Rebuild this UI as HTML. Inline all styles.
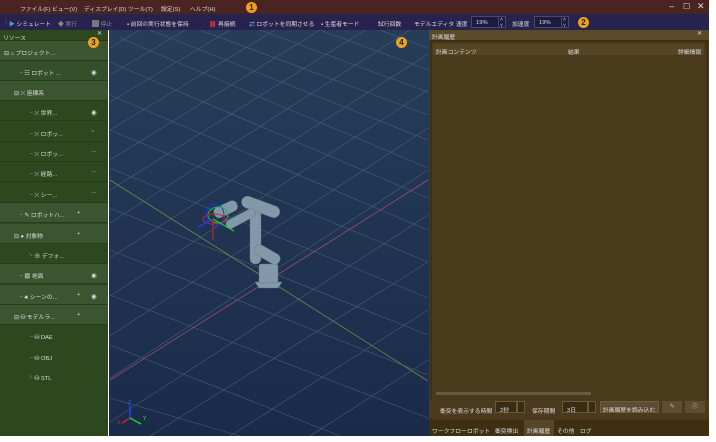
<!DOCTYPE html>
<html><head><meta charset="utf-8"><style>
*{margin:0;padding:0;box-sizing:border-box}
body{width:716px;height:442px;background:#fff;font-family:"Liberation Sans","Noto Sans CJK JP",sans-serif;font-size:5.8px;color:#ddd;position:relative;overflow:hidden}
.abs{position:absolute}
#menu{left:0;top:0;width:709px;height:14px;background:#4a2323}
#menu span{position:absolute;top:4px;color:#ddd}
#tool{left:0;top:14px;width:709px;height:16px;background:#28234e}
#tool span{position:absolute;top:5px;color:#ddd;white-space:nowrap}
.inp{position:absolute;top:2px;height:12px;border:1px solid #4a4670;background:#1e1a40;color:#ddd;padding:3px 4px}
.badge{position:absolute;width:11px;height:11px;border-radius:50%;background:#f0a020;color:#222;font-size:8px;text-align:center;line-height:11px;font-weight:bold}
#left{left:0;top:30px;width:108px;height:406px;background:#2d481f}
.row{position:absolute;left:0;width:108px;height:20px;border-bottom:1px solid #253d18}
.row span{position:absolute;top:7px;white-space:nowrap}
.hi{background:#3a5530}
#view{left:109px;top:30px;width:320px;height:406px;background:linear-gradient(#263d58,#1a2b4a)}
#right{left:429px;top:30px;width:280px;height:406px;background:#4b3a1d}
#right span{white-space:nowrap}
</style></head><body>
<div id="menu" class="abs">
<span style="left:20px">ファイル(F)</span><span style="left:52px">ビュー(V)</span><span style="left:84px">ディスプレイ(D)</span><span style="left:128px">ツール(T)</span><span style="left:161px">設定(S)</span><span style="left:190px">ヘルプ(H)</span>
<span style="left:669px;top:1px;font-size:9px">–</span><span style="left:683px;top:2px;font-size:8px">☐</span><span style="left:697px;top:1px;font-size:9px">✕</span>
</div>
<div class="badge" style="left:246px;top:2px">1</div>
<div id="tool" class="abs">
<span style="left:3px;color:#666">⋮</span>
<span style="left:9px"><b style="color:#4aa0c0">▶</b> シミュレート</span>
<span style="left:58px;color:#888">◆ 実行</span>
<span style="left:92px;color:#888"><b style="display:inline-block;width:7px;height:7px;background:#777;vertical-align:-1px"></b> 停止</span>
<span style="left:127px">▪ 前回の実行状態を保持</span>
<span style="left:209px"><b style="color:#e03040">⛓</b> 再接続</span>
<span style="left:249px"><b style="color:#6aa0e0">⇄</b> ロボットを同期させる</span>
<span style="left:321px">▪ 生産者モード</span>
<span style="left:378px">試行回数</span>
<span style="left:414px">モデルエディタ</span>
<span style="left:456px">速度</span>
<div class="inp" style="left:471px;width:28px">19%</div><div class="inp" style="left:498px;width:8px;font-size:5px;padding:0 1px">˄<br>˅</div>
<span style="left:512px">加速度</span>
<div class="inp" style="left:534px;width:28px">19%</div><div class="inp" style="left:561px;width:8px;font-size:5px;padding:0 1px">˄<br>˅</div>
</div>
<div class="badge" style="left:578px;top:17px">2</div>

<div id="left" class="abs">
<div class="abs" style="left:0;top:0;width:108px;height:11px;background:#2d481f;border-bottom:1px solid #203a14"><span class="abs" style="left:3px;top:3px">リソース</span><span class="abs" style="left:97px;top:1px">✕</span></div>
<div class="row hi" style="top:11px"><span style="left:4px">⊟ ⌂ プロジェクト...</span></div>
<div class="row" style="top:31px;background:#34502a"><span style="left:17px">╶ ☷ ロボット ...</span><span style="left:91px">◉</span></div>
<div class="row hi" style="top:51px"><span style="left:14px">⊟ ⤫ 座標系</span></div>
<div class="row" style="top:71px"><span style="left:27px">╶ ⤫ 世界...</span><span style="left:91px">◉</span></div>
<div class="row" style="top:92px"><span style="left:27px">╶ ⤫ ロボッ...</span><span style="left:91px">~</span></div>
<div class="row" style="top:112px"><span style="left:27px">╶ ⤫ ロボッ...</span><span style="left:91px">···</span></div>
<div class="row" style="top:132px"><span style="left:27px">╶ ⤫ 経路...</span><span style="left:91px">···</span></div>
<div class="row" style="top:153px"><span style="left:27px">╶ ⤫ シー...</span><span style="left:91px">···</span></div>
<div class="row hi" style="top:173px"><span style="left:17px">╶ ✎ ロボットハ...</span><span style="left:77px">+</span></div>
<div class="row hi" style="top:194px"><span style="left:14px">⊟ ● 対象物</span><span style="left:77px">+</span></div>
<div class="row" style="top:214px"><span style="left:27px">╰ ⊕ デフォ...</span></div>
<div class="row hi" style="top:234px"><span style="left:17px">╶ ▩ 地面</span><span style="left:91px">◉</span></div>
<div class="row hi" style="top:255px"><span style="left:17px">╶ ♣ シーンの...</span><span style="left:77px">+</span><span style="left:91px">◉</span></div>
<div class="row hi" style="top:275px"><span style="left:14px">⊟ ⛁ モデルラ...</span><span style="left:77px">+</span></div>
<div class="row" style="top:295px;border:0"><span style="left:27px">╶ ⛁ DAE</span></div>
<div class="row" style="top:316px;border:0"><span style="left:27px">╶ ⛁ OBJ</span></div>
<div class="row" style="top:336px;border:0"><span style="left:27px">╰ ⛁ STL</span></div>
</div>
<div class="badge" style="left:88px;top:37px">3</div>

<div id="view" class="abs">
<svg width="320" height="406" viewBox="109 30 320 406" style="position:absolute;left:0;top:0">
<g stroke="#5b6f88" stroke-width="0.6" opacity="0.7">
<path d="M110 48L140 30M110 75L185 30M110 102L230 30M110 130L275 30M110 160L320 30M110 190L365 30M110 223L410 30M110 258L428 54M110 296L428 90M110 336L428 128M110 378L428 170M110 422L428 215M150 436L428 262M230 436L428 310M310 436L428 360"/>
<path d="M150 30L428 140M120 38L428 168M110 62L428 198M110 95L428 230M110 130L428 262M110 168L428 298M110 208L428 335M110 250L428 375M110 295L428 418M110 345L340 436M110 398L240 436M200 30L428 115M260 30L428 92M320 30L428 70M380 30L428 48"/>
</g>
<path d="M110 180L428 381" stroke="#6f8a50" stroke-width="0.8"/>
<path d="M110 380L428 180" stroke="#a05070" stroke-width="0.8"/>
<g fill="#8399aa" stroke="#5f7486" stroke-width="0.4">
<path d="M255 282h27l-4 6h-19z"/>
<rect x="259" y="264" width="19" height="19" rx="2"/>
<rect x="250" y="210" width="11" height="54" rx="5"/>
<rect x="253" y="249" width="28" height="11" rx="5" transform="rotate(30 267 255)"/>
<rect x="241" y="201" width="40" height="12" rx="6" transform="rotate(20 261 206)"/>
<rect x="225" y="214" width="32" height="9" rx="4" transform="rotate(-28 241 219)"/>
<rect x="213" y="204" width="25" height="11" rx="5" transform="rotate(-25 225 209)"/>
</g>
<ellipse cx="215" cy="215" rx="9" ry="11" fill="none" stroke="#2030e0" stroke-width="1"/>
<ellipse cx="218" cy="215" rx="10" ry="8" fill="none" stroke="#20c030" stroke-width="1"/>
<ellipse cx="214" cy="219" rx="11" ry="5" fill="none" stroke="#c02030" stroke-width="1"/>
<path d="M213 219L198 227" stroke="#2040ff" stroke-width="1.2"/>
<path d="M213 219L234 231" stroke="#20d030" stroke-width="1.2"/>
<path d="M213 219L213 240" stroke="#c02030" stroke-width="1.2"/>
<path d="M130 418V405" stroke="#2040ff" stroke-width="1.5"/>
<path d="M130 418L141 424" stroke="#20d030" stroke-width="1.5"/>
<path d="M130 418L122 423" stroke="#d02030" stroke-width="1.5"/>
<text x="128" y="404" fill="#4060ff" font-size="5">Z</text>
<text x="143" y="420" fill="#40e040" font-size="5">Y</text>
<text x="117" y="424" fill="#d03040" font-size="5">X</text>
</svg>
</div>
<div class="badge" style="left:396px;top:37px">4</div>

<div id="right" class="abs">
<div class="abs" style="left:0;top:0;width:280px;height:10px;background:#5b4a28"><span class="abs" style="left:3px;top:2px">計画履歴</span><span class="abs" style="left:268px;top:1px">✕</span></div>
<div class="abs" style="left:1px;top:10px;width:278px;height:386px;background:#3f2f14"></div>
<div class="abs" style="left:3px;top:12px;width:274px;height:381px;background:#4a3a1c"></div>
<div class="abs" style="left:4px;top:14px;width:271px;height:11px;background:#574626"><span class="abs" style="left:3px;top:3px">計画コンテンツ</span><span class="abs" style="left:135px;top:3px">結果</span><span class="abs" style="left:245px;top:3px">詳細情報</span></div>
<div class="abs" style="left:7px;top:362px;width:155px;height:3px;background:#6a5a40"></div>
<div class="abs" style="left:0;top:370px;width:280px;height:18px;background:#4b3a1d"></div>
<span class="abs" style="left:11px;top:376px">衝突を表示する時間</span>
<div class="abs" style="left:66px;top:371px;width:22px;height:12px;border:1px solid #6b5a3a;background:#3a2c12;padding:3px 4px">2秒</div>
<div class="abs" style="left:88px;top:371px;width:8px;height:12px;border:1px solid #6b5a3a;background:#3a2c12"></div>
<span class="abs" style="left:103px;top:376px">保存期間</span>
<div class="abs" style="left:133px;top:371px;width:26px;height:12px;border:1px solid #6b5a3a;background:#3a2c12;padding:3px 4px">3日</div>
<div class="abs" style="left:159px;top:371px;width:8px;height:12px;border:1px solid #6b5a3a;background:#3a2c12"></div>
<div class="abs" style="left:171px;top:371px;width:59px;height:12px;background:#5e4d30;border:1px solid #6e5d40;padding:3px 2px;white-space:nowrap;overflow:hidden">計画履歴を読み込む</div>
<div class="abs" style="left:233px;top:371px;width:20px;height:12px;background:#5e4d30;text-align:center;line-height:12px;color:#9cd">✎</div>
<div class="abs" style="left:256px;top:371px;width:20px;height:12px;background:#5e4d30;text-align:center;line-height:12px">ⓘ</div>
<div class="abs" style="left:0;top:390px;width:280px;height:16px;background:#3e2f13"></div>
<span class="abs" style="left:3px;top:396px">ワークフロー</span><span class="abs" style="left:38px;top:396px">ロボット</span><span class="abs" style="left:66px;top:396px">衝突検出</span>
<div class="abs" style="left:95px;top:390px;width:30px;height:16px;background:#57462a"></div>
<span class="abs" style="left:98px;top:396px">計画履歴</span><span class="abs" style="left:128px;top:396px">その他</span><span class="abs" style="left:151px;top:396px">ログ</span>
</div>
<div class="abs" style="left:0;top:436px;width:709px;height:6px;background:#fff"></div>
</body></html>
